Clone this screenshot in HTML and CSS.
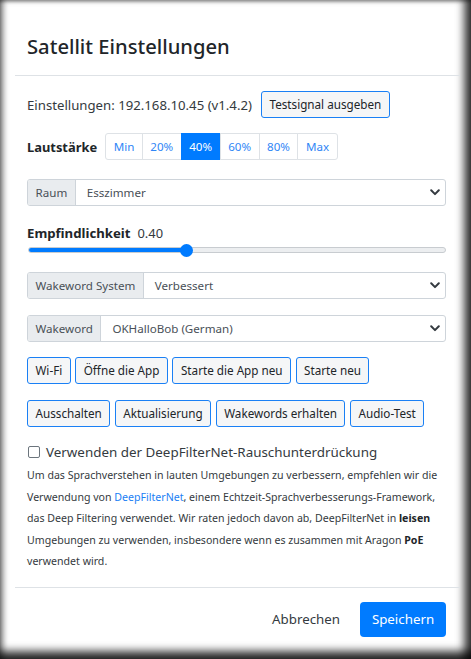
FILE: index.html
```html
<!DOCTYPE html>
<html lang="de">
<head>
<meta charset="utf-8">
<title>Satellit Einstellungen</title>
<link rel="stylesheet" href="styles.css">
</head>
<body>
<div class="frame">
  <div class="modal">
    <div class="modal-header">
      <h5 class="modal-title">Satellit Einstellungen</h5>
    </div>
    <div class="modal-body">
      <div class="row info-row">
        <span class="info-text">Einstellungen: 192.168.10.45 (v1.4.2)</span>
        <button class="btn btn-outline">Testsignal ausgeben</button>
      </div>
      <div class="row volume-row">
        <span class="label-bold">Lautstärke</span>
        <div class="btn-group">
          <button class="seg">Min</button>
          <button class="seg">20%</button>
          <button class="seg active">40%</button>
          <button class="seg">60%</button>
          <button class="seg">80%</button>
          <button class="seg">Max</button>
        </div>
      </div>
      <div class="input-group raum">
        <span class="ig-label">Raum</span>
        <div class="ig-select"><span>Esszimmer</span>
          <svg class="chev" width="10" height="7" viewBox="0 0 10 7"><path d="M1.2 1.3 L5 5.1 L8.8 1.3" fill="none" stroke="#343a40" stroke-width="2" stroke-linecap="round" stroke-linejoin="round"/></svg>
        </div>
      </div>
      <div class="sens">
        <div class="sens-label"><span class="label-bold">Empfindlichkeit</span><span class="sens-val">0.40</span></div>
        <div class="slider">
          <div class="track"><div class="fill" style="width:38%"></div></div>
          <div class="thumb" style="left:38%"></div>
        </div>
      </div>
      <div class="input-group ww-system">
        <span class="ig-label">Wakeword System</span>
        <div class="ig-select"><span>Verbessert</span>
          <svg class="chev" width="10" height="7" viewBox="0 0 10 7"><path d="M1.2 1.3 L5 5.1 L8.8 1.3" fill="none" stroke="#343a40" stroke-width="2" stroke-linecap="round" stroke-linejoin="round"/></svg>
        </div>
      </div>
      <div class="input-group ww">
        <span class="ig-label">Wakeword</span>
        <div class="ig-select"><span>OKHalloBob (German)</span>
          <svg class="chev" width="10" height="7" viewBox="0 0 10 7"><path d="M1.2 1.3 L5 5.1 L8.8 1.3" fill="none" stroke="#343a40" stroke-width="2" stroke-linecap="round" stroke-linejoin="round"/></svg>
        </div>
      </div>
      <div class="btn-row first">
        <button class="btn btn-outline">Wi-Fi</button>
        <button class="btn btn-outline">Öffne die App</button>
        <button class="btn btn-outline">Starte die App neu</button>
        <button class="btn btn-outline">Starte neu</button>
      </div>
      <div class="btn-row second">
        <button class="btn btn-outline">Ausschalten</button>
        <button class="btn btn-outline">Aktualisierung</button>
        <button class="btn btn-outline">Wakewords erhalten</button>
        <button class="btn btn-outline">Audio-Test</button>
      </div>
      <label class="check">
        <span class="box"></span>
        <span>Verwenden der DeepFilterNet-Rauschunterdrückung</span>
      </label>
      <p class="note">Um das Sprachverstehen in lauten Umgebungen zu verbessern, empfehlen wir die Verwendung von <a href="#">DeepFilterNet</a>, einem Echtzeit-Sprachverbesserungs-Framework, das Deep Filtering verwendet. Wir raten jedoch davon ab, DeepFilterNet in <b>leisen</b> Umgebungen zu verwenden, insbesondere wenn es zusammen mit Aragon <b>PoE</b> verwendet wird.</p>
    </div>
    <div class="modal-footer">
      <button class="btn-link">Abbrechen</button>
      <button class="btn-primary">Speichern</button>
    </div>
  </div>
</div>
</body>
</html>
```

FILE: styles.css
```css
* { box-sizing: border-box; }
html, body { margin: 0; padding: 0; background: #fff; }
body {
  font-family: "Noto Sans", "Open Sans", sans-serif;
  color: #212529;
  font-size: 13.2px;
}
.frame {
  width: 471px;
  height: 659px;
  position: relative;
  overflow: hidden;
  background: #fff;
  box-shadow:
    inset 6px 0 6px -3px rgba(0,0,0,0.45),
    inset 0 3px 3px -1px rgba(0,0,0,0.25),
    inset -10px 0 8px -3px rgba(0,0,0,0.75),
    inset 0 -11px 8px -3px rgba(0,0,0,0.8);
}
.modal {
  margin-left: 15px;
  width: 445px;
}
.modal-header {
  padding: 31px 12px 14px;
  border-bottom: 1px solid #dee2e6;
}
.modal-title {
  margin: 0;
  font-size: 20.2px;
  font-weight: 500;
  line-height: 30px;
  color: #212529;
}
.modal-body {
  padding: 15px 14px 14px 12px;
}
.row {
  display: flex;
  align-items: center;
}
.info-row { gap: 9px; height: 27px; }
.info-text { color: #343a40; }
.btn {
  font-family: inherit;
  font-size: 11.7px;
  color: #212529;
  height: 27px;
  padding: 0 7.5px;
  border-radius: 3px;
  line-height: 25px;
  cursor: pointer;
  white-space: nowrap;
}
.btn-outline {
  background: #f5f6f7;
  border: 1px solid #1a80f5;
}
.volume-row { margin-top: 15px; gap: 8px; }
.label-bold { font-weight: 700; color: #212529; font-size: 12.9px; }
.btn-group {
  display: flex;
  height: 27px;
}
.seg {
  font-family: inherit;
  font-size: 11.6px;
  color: #2f86f6;
  background: #fff;
  border: 1px solid #dee2e6;
  margin-left: -1px;
  padding: 0 7.5px;
  height: 27px;
}
.seg:first-child { margin-left: 0; border-radius: 3px 0 0 3px; }
.seg:last-child { border-radius: 0 3px 3px 0; }
.seg.active { background: #007bff; color: #fff; border-color: #007bff; }

.input-group {
  display: flex;
  height: 27px;
  border: 1px solid #ced4da;
  border-radius: 3px;
  overflow: hidden;
  font-size: 11.6px;
}
.raum { margin-top: 19px; }
.ww-system { margin-top: 14px; }
.ww { margin-top: 16px; }
.ig-label {
  background: #e9ecef;
  border-right: 1px solid #ced4da;
  color: #495057;
  padding: 0 7.5px;
  line-height: 25px;
  white-space: nowrap;
}
.ig-select {
  flex: 1;
  display: flex;
  align-items: center;
  justify-content: space-between;
  padding: 0 5px 0 11px;
  color: #495057;
}
.chev { display: block; }

.sens { margin-top: 18px; }
.sens-label { display: flex; gap: 7px; align-items: baseline; line-height: 18px; }
.sens-label .label-bold { font-size: 13.2px; }
.sens-val { color: #343a40; font-weight: 400; font-size: 12.9px; }
.slider {
  position: relative;
  height: 15px;
  margin-top: 1px;
}
.track {
  position: absolute;
  left: 1px; right: 0;
  top: 4px;
  height: 6px;
  border: 1px solid #c8ccd0;
  border-radius: 3px;
  background: #eceef0;
  overflow: hidden;
}
.fill { height: 100%; background: #007bff; }
.thumb {
  position: absolute;
  top: 0.5px;
  width: 13px;
  height: 13px;
  margin-left: -6px;
  border-radius: 50%;
  background: #007bff;
}

.btn-row { display: flex; gap: 4.5px; }
.btn-row.first { margin-top: 15px; }
.btn-row.second { margin-top: 16px; }

.check {
  display: flex;
  align-items: center;
  gap: 6px;
  margin-top: 15px;
  font-size: 13.4px;
  color: #343a40;
  line-height: 20px;
}
.box {
  width: 12px; height: 12px;
  border: 1px solid #6c757d;
  border-radius: 2px;
  margin-left: 1px;
}
.note {
  margin: 3px 0 0;
  font-size: 10.6px;
  line-height: 21.5px;
  color: #343a40;
}
.note a { color: #1a80f5; text-decoration: none; }
.note b { font-weight: 700; color: #212529; }

.modal-footer {
  border-top: 1px solid #dee2e6;
  display: flex;
  justify-content: flex-end;
  align-items: center;
  gap: 20px;
  padding: 14px 14px 0 12px;
}
.btn-link {
  font-family: inherit;
  font-size: 13.3px;
  background: none;
  border: none;
  color: #343a40;
  padding: 0;
}
.btn-primary {
  font-family: inherit;
  font-size: 13.3px;
  background: #007bff;
  color: #fff;
  border: none;
  border-radius: 4px;
  height: 35px;
  width: 86px;
}
```
